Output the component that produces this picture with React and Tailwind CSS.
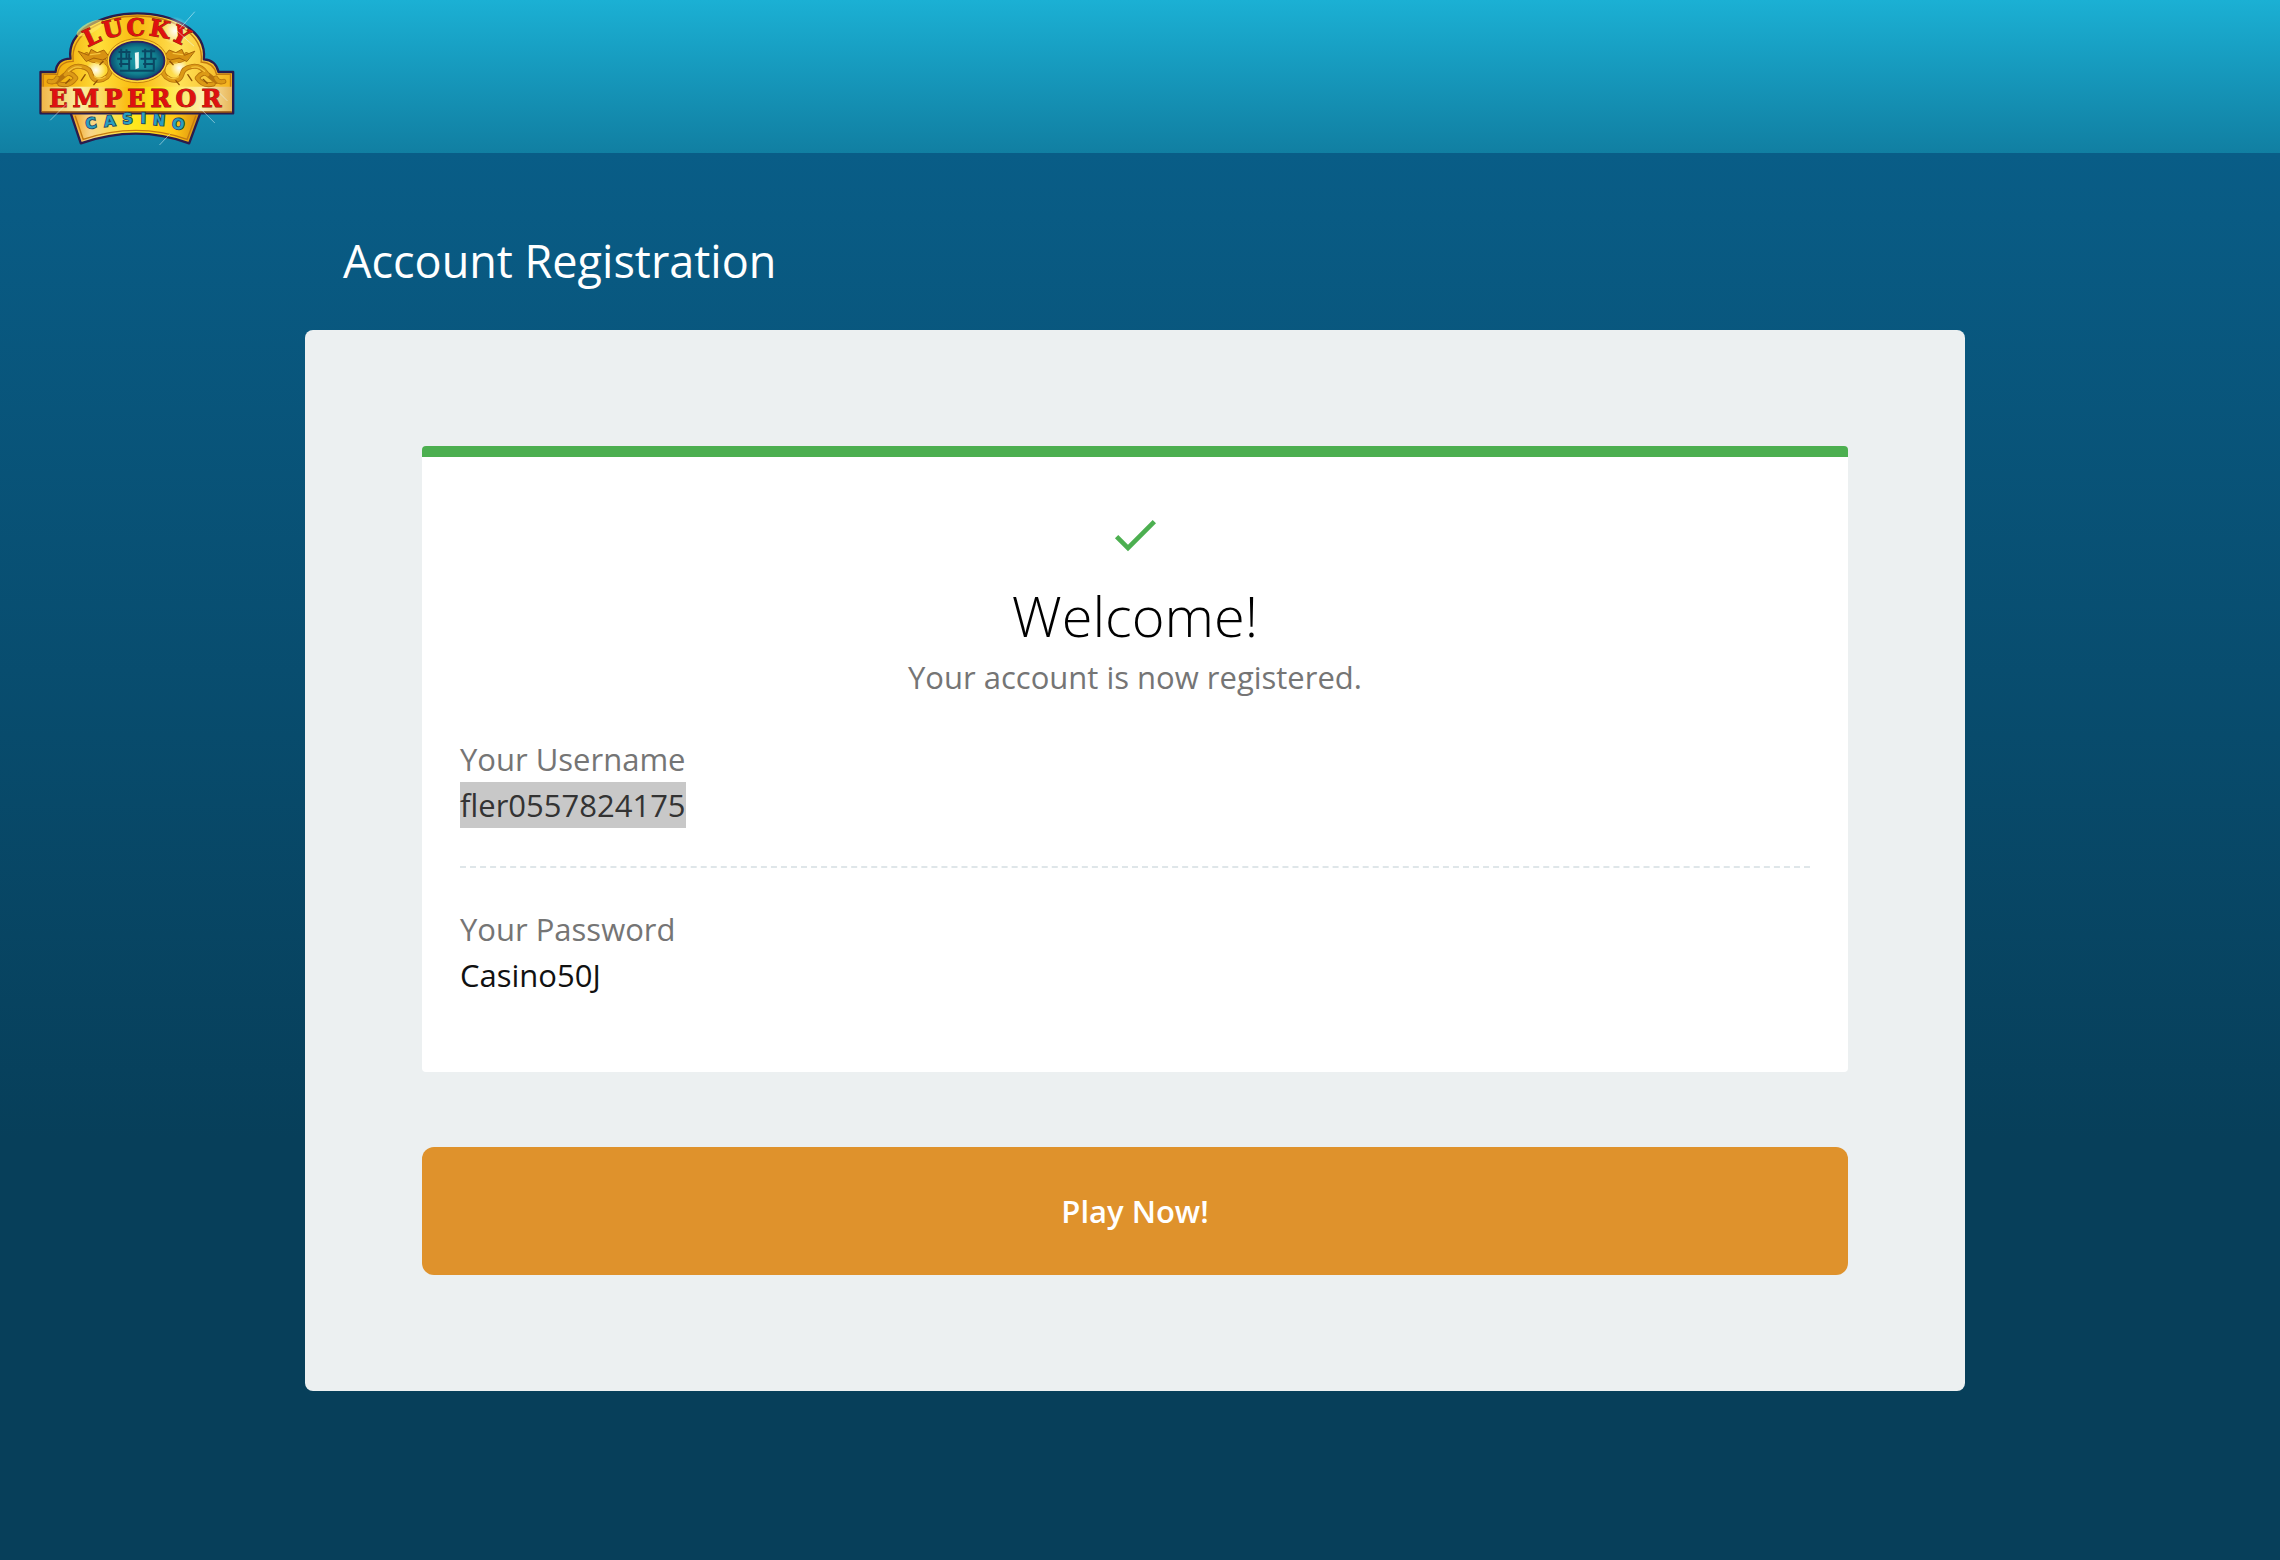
function Dragon({ flip }) {
  return (
    <g transform={flip ? "matrix(-1 0 0 1 700 0)" : undefined} strokeLinecap="round" strokeLinejoin="round" fill="none">
      <path d="M88 246 Q104 252 112 236 M120 254 Q150 262 168 236 Q150 214 136 226 Q122 238 110 246 M140 222 Q158 196 186 202 Q210 206 214 226 Q222 250 250 240 Q276 228 270 204 Q262 182 236 184 Q206 186 200 166" stroke="#b8740c" strokeWidth="15" />
      <path d="M88 246 Q104 252 112 236 M120 254 Q150 262 168 236 Q150 214 136 226 M140 222 Q158 196 186 202 Q210 206 214 226 Q222 250 250 240 Q276 228 270 204 Q262 182 236 184 Q206 186 200 166" stroke="#dc9a16" strokeWidth="10" />
      <path d="M176 156 L206 168 L214 150 L232 160 L252 152 L268 172 L248 182 L222 176 L200 186 Z" fill="#d89212" stroke="#a86408" strokeWidth="3" />
      <path d="M146 216 Q164 198 184 204 M224 232 Q240 244 256 232 M212 166 L240 162 M228 190 L252 194" stroke="#f5c53c" strokeWidth="4" />
      <path d="M196 226 L184 244 M232 244 L222 256 M150 240 L138 252 M250 186 L240 196" stroke="#8f5206" strokeWidth="4" />
    </g>
  );
}

function Logo() {
  return (
    <svg viewBox="55 35 590 402" className="h-[134px] w-[197px]" role="img" aria-label="Lucky Emperor Casino">
      <defs>
        <linearGradient id="gold" x1="0" y1="0" x2="1" y2="0">
          <stop offset="0" stopColor="#f0a60e" />
          <stop offset="0.16" stopColor="#f6b916" />
          <stop offset="0.3" stopColor="#ffdf3a" />
          <stop offset="0.5" stopColor="#f9b90f" />
          <stop offset="0.72" stopColor="#ffe258" />
          <stop offset="1" stopColor="#f4b01a" />
        </linearGradient>
        <linearGradient id="band" x1="0" y1="0" x2="1" y2="0">
          <stop offset="0" stopColor="#f0b64a" />
          <stop offset="0.2" stopColor="#fdf0a4" />
          <stop offset="0.45" stopColor="#fbbd12" />
          <stop offset="0.6" stopColor="#ffe51e" />
          <stop offset="0.85" stopColor="#fdeeb0" />
          <stop offset="1" stopColor="#e8b65a" />
        </linearGradient>
        <linearGradient id="ribbon" x1="0" y1="0" x2="1" y2="0">
          <stop offset="0" stopColor="#f0a015" />
          <stop offset="0.15" stopColor="#f8d58a" />
          <stop offset="0.5" stopColor="#ffe81c" />
          <stop offset="0.8" stopColor="#ffc814" />
          <stop offset="1" stopColor="#d78a10" />
        </linearGradient>
        <radialGradient id="jade">
          <stop offset="0" stopColor="#1f9ca8" />
          <stop offset="0.7" stopColor="#12808f" />
          <stop offset="1" stopColor="#0a4a70" />
        </radialGradient>
        <radialGradient id="shine">
          <stop offset="0" stopColor="#ffffff" stopOpacity="0.95" />
          <stop offset="1" stopColor="#ffffff" stopOpacity="0" />
        </radialGradient>
      </defs>

      <g stroke="#2b1c4c" strokeWidth="7" strokeLinejoin="round">
        <path d="M152 340 L183 432 Q350 374 508 432 L542 340 Z" fill="url(#ribbon)" />
        <path d="M62 342 V218 H107 Q112 178 152 178 C140 92 250 42 352 42 C456 42 562 92 552 180 Q588 182 596 218 H640 V342 Z" fill="url(#gold)" />
      </g>
      <path d="M70 335 V225 H113 Q118 186 160 186 C150 100 254 50 352 50 C452 50 554 100 544 188 Q582 190 590 225 H632 V335 Z" fill="none" stroke="#c47a10" strokeWidth="4" />
      <path d="M66 262 H636 V338 H66 Z" fill="url(#band)" />
      <path d="M66 338 H636" stroke="#8e4c10" strokeWidth="4" />
      <path d="M166 349 L190 420 Q350 366 502 420 L528 349" fill="none" stroke="#c47a10" strokeWidth="4" />

      <ellipse cx="210" cy="86" rx="44" ry="16" fill="#ffe96a" opacity="0.6" transform="rotate(-28 210 86)" />
      <circle cx="466" cy="94" r="42" fill="url(#shine)" />
      <circle cx="228" cy="212" r="30" fill="url(#shine)" />
      <circle cx="478" cy="206" r="26" fill="url(#shine)" />

      <Dragon />
      <Dragon flip />

      <ellipse cx="352" cy="184" rx="90" ry="66" fill="#ffd83a" stroke="#c9850f" strokeWidth="3" />
      <ellipse cx="352" cy="184" rx="82" ry="57" fill="url(#jade)" stroke="#34205e" strokeWidth="5" />
      <g fill="none" stroke="#0a4763" strokeWidth="6">
        <path d="M296 158 H332 M304 148 V204 M320 150 V176 M292 178 H336 M298 194 H330 M328 162 V212" />
        <path d="M366 156 H406 M376 148 V206 M394 150 V178 M362 178 H410 M370 194 H404 M402 180 V212" />
        <path d="M300 214 H404" />
      </g>
      <path d="M345 160 L357 158 V206 L347 210 Z M340 184 H350" fill="#eaf8f4" />

      <g fontFamily="'DejaVu Serif', serif" fontWeight="700" fill="#e01010" stroke="#8a2a08" strokeWidth="3" paintOrder="stroke">
        <text x="204 254 320 386 450" y="144 118 110 108 120" rotate="-25 -12 0 10 26" fontSize="70">LUCKY</text>
        <text x="88 158 253 322 392 467 545" y="322" fontSize="72">EMPEROR</text>
      </g>
      <text
        x="200 254 308 362 398 454"
        y="390 382 374 372 376 386"
        rotate="-10 -6 -3 1 5 10"
        fontFamily="'DejaVu Sans', sans-serif"
        fontWeight="700"
        fontSize="44"
        fill="#2a9fc0"
        stroke="#22405c"
        strokeWidth="5"
        paintOrder="stroke"
      >
        CASINO
      </text>

      <g stroke="#e8fbff" strokeWidth="3" strokeLinecap="round" opacity="0.5">
        <path d="M524 38 L480 88 M466 90 L522 140 M92 362 L138 316 M540 326 L584 370 M418 438 L450 404 M600 282 L622 304" />
      </g>
    </svg>
  );
}

function Credential({ label, children }) {
  return (
    <div className="leading-[46px]">
      <dt className="text-[#757575]">{label}</dt>
      <dd>{children}</dd>
    </div>
  );
}

export default function App() {
  return (
    <div className="flex min-h-screen flex-col bg-[#073f5a] font-['Open_Sans',sans-serif] text-[31px] text-[#111111]">
      <header className="bg-linear-to-b from-[#1bb0d4] to-[#117fa2] px-[38px] pt-[11px] pb-2">
        <Logo />
      </header>
      <main className="grow bg-linear-to-b from-[#095d87] to-[#073f5a] to-70% pr-[10px] pb-[168px]">
        <div className="mx-auto w-full max-w-[1660px]">
          <h1 className="px-[38px] pt-[76px] pb-[37px] text-[45px] leading-[64px] text-white">Account Registration</h1>
          <section className="rounded-lg bg-[#ecf0f1] px-[117px] py-[116px]">
            <div className="rounded border-t-[11px] border-[#4caf50] bg-white px-[38px] pt-[50px] pb-[74px]">
              <div className="flex flex-col items-center text-center">
                <svg viewBox="0 0 24 24" className="size-[56px] text-[#4caf50]" fill="currentColor" aria-hidden="true">
                  <path d="M9 16.17 4.83 12l-1.42 1.41L9 19 21 7l-1.41-1.41z" />
                </svg>
                <h2 className="mt-[14px] text-[56px] leading-[77px] font-[350] text-black">Welcome!</h2>
                <p className="leading-[46px] text-[#757575]">Your account is now registered.</p>
              </div>
              <dl className="mt-9">
                <Credential label="Your Username">
                  <mark className="inline-block bg-[#c8c8c8] align-top text-[#333333]">fler0557824175</mark>
                </Credential>
                <hr className="my-[38px] border-t-2 border-dashed border-[#dfe6e9]" />
                <Credential label="Your Password">Casino50J</Credential>
              </dl>
            </div>
            <button type="button" className="mt-[75px] block w-full rounded-xl bg-[#df922c] py-[41px] leading-[46px] font-semibold text-white">
              Play Now!
            </button>
          </section>
        </div>
      </main>
    </div>
  );
}
